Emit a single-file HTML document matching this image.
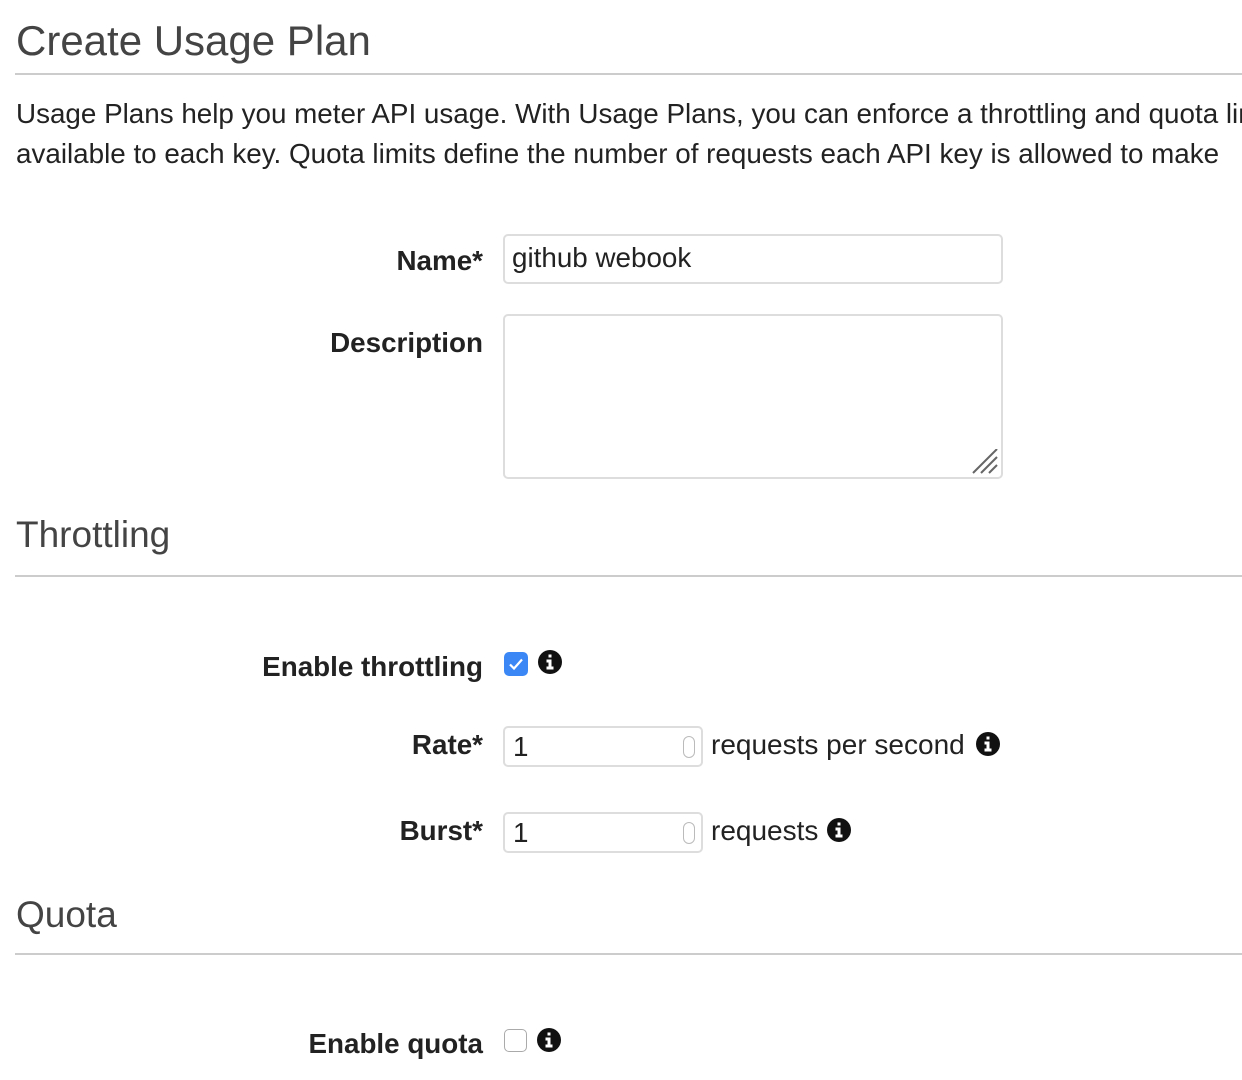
<!DOCTYPE html>
<html><head><meta charset="utf-8"><style>
body{margin:0;width:1242px;height:1080px;overflow:hidden;background:#fff;position:relative;font-family:"Liberation Sans",sans-serif;color:#222}
.a{position:absolute;white-space:nowrap}
.h{color:#444;font-weight:normal}
.hr{position:absolute;left:15px;width:1227px;height:2px;background:#ccc}
.p{font-size:27.8px;left:16px}
.lbl{font-size:27.8px;font-weight:bold;right:759px;text-align:right}
.box{position:absolute;border:2px solid #ddd;border-radius:5px;box-sizing:border-box;background:#fff}
.num{font-size:27.8px;padding-left:8px}
.spin{position:absolute;right:6px;top:8px;width:12px;height:22px;border:1px solid #bbb;border-radius:6px;box-sizing:border-box}
.info{position:absolute;width:24px;height:24px}
.t{font-size:28px}
</style></head><body>
<div class="a h" style="left:16px;top:13px;font-size:42px;line-height:56px">Create Usage Plan</div>
<div class="hr" style="top:73px"></div>
<div class="a p" style="top:96px;line-height:36px">Usage Plans help you meter API usage. With Usage Plans, you can enforce a throttling and quota limits</div>
<div class="a p" style="top:136px;line-height:36px">available to each key. Quota limits define the number of requests each API key is allowed to make</div>

<div class="a lbl" style="top:244px;line-height:34px">Name*</div>
<div class="box" style="left:503px;top:234px;width:500px;height:50px"><span class="a num" style="top:5px;line-height:34px;padding-left:7px">github webook</span></div>
<div class="a lbl" style="top:326px;line-height:34px">Description</div>
<div class="box" style="left:503px;top:314px;width:500px;height:165px">
<svg style="position:absolute;right:2px;bottom:2px" width="28" height="26" viewBox="0 0 28 26"><g stroke="#666" stroke-width="2"><line x1="2" y1="24" x2="26" y2="0"/><line x1="10" y1="24" x2="26" y2="8"/><line x1="18" y1="24" x2="26" y2="16"/></g></svg></div>

<div class="a h" style="left:16px;top:514px;font-size:37px;line-height:42px">Throttling</div>
<div class="hr" style="top:575px"></div>

<div class="a lbl" style="top:650px;line-height:34px">Enable throttling</div>
<div style="position:absolute;left:504px;top:652px;width:24px;height:24px;background:#3b87f5;border-radius:5px"><svg width="24" height="24"><path d="M6 12.5l4 4 8-9" stroke="#fff" stroke-width="2.2" fill="none"/></svg></div>
<svg class="info" style="left:538px;top:650px" viewBox="0 0 24 24"><circle cx="12" cy="12" r="12" fill="#111"/><path d="M10.5 4.5h3v3h-3z M8.5 9.5h5v7h2v3h-7v-3h2v-4h-2z" fill="#fff"/></svg>

<div class="a lbl" style="top:728px;line-height:34px">Rate*</div>
<div class="box" style="left:503px;top:726px;width:200px;height:41px"><span class="a num" style="top:2px;line-height:34px">1</span><div class="spin"></div></div>
<div class="a t" style="left:711px;top:728px;line-height:34px">requests per second</div>
<svg class="info" style="left:976px;top:732px" viewBox="0 0 24 24"><circle cx="12" cy="12" r="12" fill="#111"/><path d="M10.5 4.5h3v3h-3z M8.5 9.5h5v7h2v3h-7v-3h2v-4h-2z" fill="#fff"/></svg>

<div class="a lbl" style="top:814px;line-height:34px">Burst*</div>
<div class="box" style="left:503px;top:812px;width:200px;height:41px"><span class="a num" style="top:2px;line-height:34px">1</span><div class="spin"></div></div>
<div class="a t" style="left:711px;top:814px;line-height:34px">requests</div>
<svg class="info" style="left:827px;top:818px" viewBox="0 0 24 24"><circle cx="12" cy="12" r="12" fill="#111"/><path d="M10.5 4.5h3v3h-3z M8.5 9.5h5v7h2v3h-7v-3h2v-4h-2z" fill="#fff"/></svg>

<div class="a h" style="left:16px;top:894px;font-size:37px;line-height:42px">Quota</div>
<div class="hr" style="top:953px"></div>

<div class="a lbl" style="top:1027px;line-height:34px">Enable quota</div>
<div style="position:absolute;left:504px;top:1029px;width:23px;height:23px;border:1px solid #aaa;border-radius:5px;box-sizing:border-box"></div>
<svg class="info" style="left:537px;top:1028px" viewBox="0 0 24 24"><circle cx="12" cy="12" r="12" fill="#111"/><path d="M10.5 4.5h3v3h-3z M8.5 9.5h5v7h2v3h-7v-3h2v-4h-2z" fill="#fff"/></svg>
</body></html>
